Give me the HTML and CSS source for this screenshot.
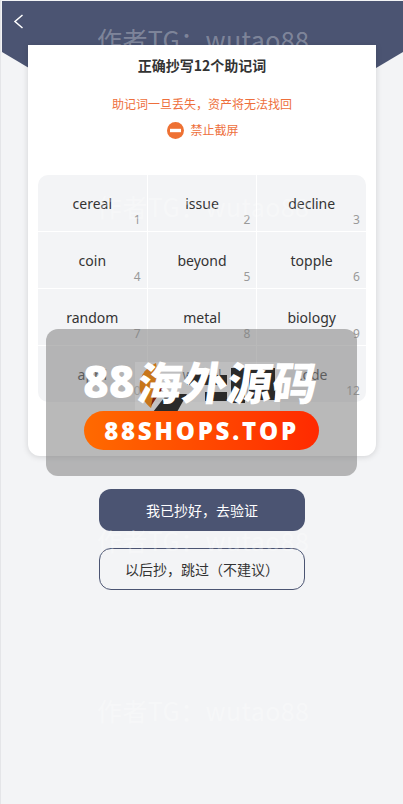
FILE: index.html
```html
<!DOCTYPE html>
<html>
<head>
  <title>备份助记词</title>
  <meta charset="utf-8">
  <link rel="stylesheet" href="styles.css">
</head>
<body>
  <div class="page">
    <header class="top">
      <svg class="back" width="12" height="16" viewBox="0 0 12 16"><path d="M9.5 1 L2 7.5 L9.5 14" fill="none" stroke="#fff" stroke-width="1.5"/></svg>
    </header>

    <section class="card">
      <h1 class="title">正确抄写12个助记词</h1>
      <p class="warn">助记词一旦丢失，资产将无法找回</p>
      <div class="ban">
        <svg width="17" height="17" viewBox="0 0 17 17"><circle cx="8.5" cy="8.5" r="8.5" fill="#ee7133"/><rect x="3" y="6.8" width="11" height="3.4" fill="#fff"/></svg>
        <span>禁止截屏</span>
      </div>
      <div class="words">
        <div class="word">cereal<i>1</i></div>
        <div class="word">issue<i>2</i></div>
        <div class="word">decline<i>3</i></div>
        <div class="word">coin<i>4</i></div>
        <div class="word">beyond<i>5</i></div>
        <div class="word">topple<i>6</i></div>
        <div class="word">random<i>7</i></div>
        <div class="word">metal<i>8</i></div>
        <div class="word">biology<i>9</i></div>
        <div class="word">april<i>10</i></div>
        <div class="word">wheel<i>11</i></div>
        <div class="word">code<i>12</i></div>
      </div>
    </section>

    <div class="actions">
      <button class="btn btn-main">我已抄好，去验证</button>
      <button class="btn btn-line">以后抄，跳过（不建议）</button>
    </div>
  </div>

  <div class="mark mark-1">作者TG：wutao88</div>
  <div class="mark mark-2">作者TG：wutao88</div>
  <div class="mark mark-3">作者TG：wutao88</div>
  <div class="mark mark-4">作者TG：wutao88</div>

  <div class="promo">
    <svg class="promo-logo" width="145" height="50" viewBox="0 0 145 50">
      <rect width="145" height="48" fill="#fff" opacity="0.14"/>
      <path d="M21 1 C8 7 3 17 5 29 C7 37 11 42 16 46 L24 20 Z" fill="#c8761a"/>
      <path d="M23 12 L16 44 L28 26 Z" fill="#7a2010"/>
      <path d="M32 32 L18 50 L42 50 L52 32 Z" fill="#2a2a2a"/>
      <rect x="52" y="13" width="40" height="10" fill="#2a2a2a"/>
      <rect x="70" y="30" width="22" height="9" fill="#2a2a2a"/>
      <rect x="96" y="6" width="14" height="35" fill="#2a2a2a"/>
      <rect x="114" y="6" width="26" height="32" fill="#2a2a2a"/>
    </svg>
    <div class="promo-title"><span class="promo-num">88</span><span class="promo-cn">海外源码</span></div>
    <div class="promo-pill">88SHOPS.TOP</div>
  </div>
</body>
</html>
```

FILE: styles.css
```css
html, body {
  margin: 0;
  height: 100%;
  background: #f3f4f6;
}

body {
  font-family: "Noto Sans CJK SC", "Noto Sans", sans-serif;
  overflow: hidden;
  position: relative;
}

.page {
  height: 804px;
  box-sizing: border-box;
  padding: 1px 0 0 2px;
  box-shadow: inset 1px 0 0 #e4e5e8;
}

.top {
  height: 170px;
  padding: 13px 0 0 11px;
  box-sizing: border-box;
  background: #4b5472;
  clip-path: polygon(0 0, 100% 0, 100% 51px, 50% 170px, 0 51px);
}

.back {
  display: block;
}

.card {
  width: 348px;
  height: 411px;
  margin: -126px 0 0 26px;
  box-sizing: border-box;
  padding: 10px 10px 0;
  background: #fff;
  border-radius: 0 0 12px 12px;
  box-shadow: 0 1px 6px rgba(0, 0, 0, 0.14);
  text-align: center;
  position: relative;
}

.title {
  margin: 0;
  font-size: 14px;
  line-height: 20px;
  font-weight: 700;
  color: #333;
}

.warn {
  margin: 19px 0 0;
  font-size: 12px;
  line-height: 20px;
  color: #ee6f3c;
}

.ban {
  display: flex;
  justify-content: center;
  align-items: center;
  gap: 6px;
  margin-top: 6px;
  padding-left: 2px;
  font-size: 12px;
  line-height: 20px;
  color: #ee6f3c;
}

.words {
  display: grid;
  grid-template-columns: repeat(3, 1fr);
  grid-auto-rows: 56px;
  gap: 1px;
  margin-top: 35px;
  border-radius: 10px;
  overflow: hidden;
}

.word {
  position: relative;
  background: #f3f4f6;
  font-family: "Noto Sans", sans-serif;
  font-size: 14px;
  line-height: 58px;
  color: #333;
}

.word i {
  position: absolute;
  right: 6px;
  bottom: 3px;
  font-style: normal;
  font-size: 12px;
  line-height: 16px;
  color: #999;
}

.actions {
  display: flex;
  flex-direction: column;
  align-items: center;
  gap: 17px;
  margin: 33px 1px 0 0;
}

.btn {
  width: 206px;
  height: 42px;
  box-sizing: border-box;
  border-radius: 12px;
  font: inherit;
  font-size: 14px;
}

.btn-main {
  border: 0;
  background: #4b5472;
  color: #fff;
}

.btn-line {
  border: 1px solid #4b5472;
  background: transparent;
  color: #333;
}

.mark {
  position: absolute;
  left: 97px;
  font-size: 25px;
  letter-spacing: 0.4px;
  line-height: 32px;
  color: rgba(255, 255, 255, 0.3);
  white-space: nowrap;
  pointer-events: none;
}

.mark-1 { top: 23px; }
.mark-2 { top: 190px; }
.mark-3 { top: 524px; }
.mark-4 { top: 694px; }

.promo {
  position: absolute;
  left: 46px;
  top: 329px;
  width: 311px;
  height: 147px;
  border-radius: 12px;
  background: rgba(128, 128, 128, 0.55);
}

.promo-logo {
  position: absolute;
  left: 89px;
  top: 33px;
}

.promo-title {
  position: absolute;
  left: 37px;
  top: 22px;
  display: flex;
  align-items: center;
  line-height: 60px;
  color: #fff;
  white-space: nowrap;
}

.promo-num {
  font-family: "Open Sans", sans-serif;
  font-size: 44px;
  font-weight: 800;
  margin-right: 3px;
}

.promo-cn {
  font-size: 45px;
  font-weight: 900;
  transform: skewX(-8deg);
}

.promo-pill {
  position: absolute;
  left: 38px;
  top: 82px;
  width: 235px;
  height: 39px;
  border-radius: 20px;
  background: linear-gradient(90deg, #ff6a00, #ff2a00);
  color: #fff;
  font-family: "Open Sans", sans-serif;
  font-size: 24px;
  font-weight: 800;
  line-height: 39px;
  letter-spacing: 2.8px;
  text-align: center;
}
```
